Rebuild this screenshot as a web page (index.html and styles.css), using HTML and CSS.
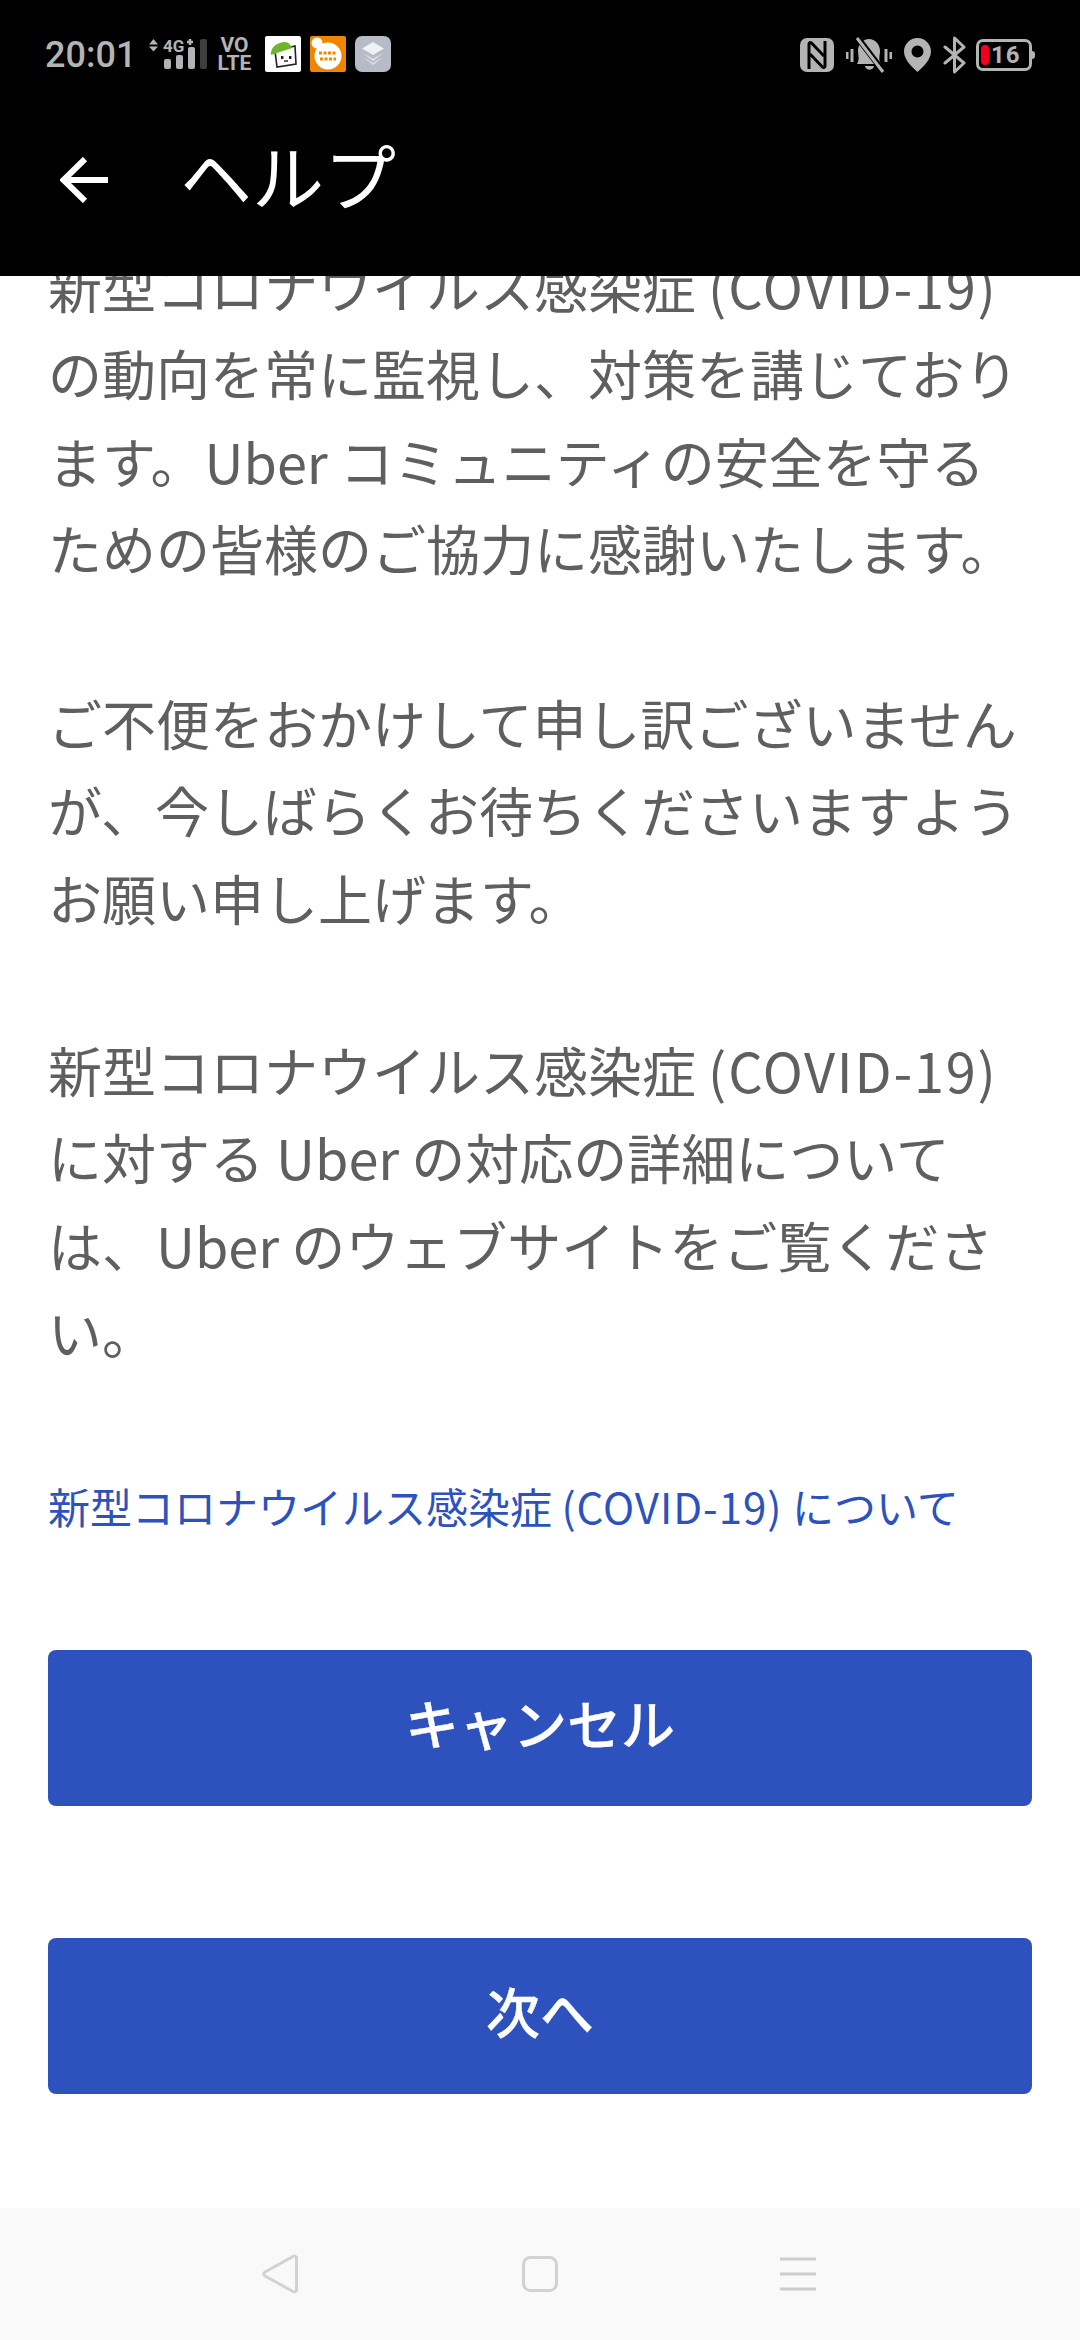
FILE: index.html
```html
<!DOCTYPE html>
<html lang="ja">
<head>
<meta charset="utf-8">
<title>ヘルプ</title>
<link rel="stylesheet" href="styles.css">
</head>
<body>
<div class="phone">
  <header class="top">
    <div class="status">
      <div class="status-left">
        <span class="time">20:01</span>
        <svg class="net" width="62" height="30" viewBox="0 0 62 30">
          <path d="M0 5.500 4.500 0 9 5.500ZM0 7.500H9L4.500 12.500Z" fill="#b4b4b4"/>
          <text x="14" y="12.500" class="net-text">4G</text>
          <path d="M41 0V6M38 3H44" stroke="#b4b4b4" stroke-width="2.500" fill="none"/>
          <rect x="15" y="20" width="7" height="10" rx="2" fill="#b4b4b4"/>
          <rect x="27" y="16" width="7" height="14" rx="2" fill="#b4b4b4"/>
          <rect x="39" y="8" width="7" height="22" rx="2" fill="#b4b4b4"/>
          <rect x="51" y="0" width="7" height="30" rx="2" fill="#3e3e3e"/>
        </svg>
        <div class="volte"><span>VO</span><span>LTE</span></div>
        <div class="apps">
          <svg class="app" width="36" height="36" viewBox="0 0 36 36">
            <rect width="36" height="36" rx="2" fill="#fff"/>
            <path d="M10 15 30 10 31 28 12 31Z" fill="#fff" stroke="#222" stroke-width="1.600"/>
            <path d="M6 19C5 11 13 6 20 6 23 6 26 9 27 12Z" fill="#6fb52c"/>
            <rect x="16" y="20" width="2.400" height="3" fill="#222"/><rect x="24" y="20" width="2.400" height="3" fill="#222"/>
            <path d="M19 25H23" stroke="#222" stroke-width="1.400"/>
          </svg>
          <svg class="app" width="36" height="36" viewBox="0 0 36 36">
            <rect width="36" height="36" rx="2" fill="#f28500"/>
            <circle cx="18" cy="20" r="13.500" fill="#fff"/><circle cx="7" cy="7" r="5.500" fill="#fff"/>
            <path d="M9 17H27M10 23H26" stroke="#f28500" stroke-width="3" stroke-dasharray="3 1.500"/>
          </svg>
          <svg class="app" width="36" height="36" viewBox="0 0 36 36">
            <rect width="36" height="36" rx="7" fill="#b7bbc6"/>
            <path d="M18 6 29 12.500 18 19 7 12.500Z" fill="#f0f1f4"/>
            <path d="M7 16.500 18 23 29 16.500 18 25Z" fill="#e6e8ec"/>
            <path d="M8 21 18 27 28 21 18 29Z" fill="#dfe1e7"/>
          </svg>
        </div>
      </div>
      <div class="status-right">
        <svg width="34" height="34" viewBox="0 0 34 34">
          <rect width="34" height="34" rx="7" fill="#b4b4b4"/>
          <path d="M9 31V6C9 4.500 10.500 4 11.500 5L24 18M25 3V28C25 29.500 23.500 30 22.500 29L10 16" fill="none" stroke="#000" stroke-width="3"/>
        </svg>
        <svg width="46" height="36" viewBox="0 0 46 36">
          <path d="M11 27C14 23 12 18 12 14 12 7 17 2 23 2 29 2 34 7 34 14 34 18 32 23 35 27ZM19 29H28C27 34 20 34 19 29Z" fill="#b4b4b4"/>
          <path d="M11 0 37 34" stroke="#000" stroke-width="6"/>
          <path d="M11 1 37 35" stroke="#b4b4b4" stroke-width="3"/>
          <path d="M1 15V22M6 12V25M40 12V25M45 15V22" stroke="#b4b4b4" stroke-width="3"/>
        </svg>
        <svg width="27" height="34" viewBox="0 0 27 34">
          <path fill-rule="evenodd" d="M13.500 0C6 0 0 6 0 13.500 0 22 9 30 13.500 34 18 30 27 22 27 13.500 27 6 21 0 13.500 0ZM13.500 7.500A6 6 0 1 1 13.500 19.500 6 6 0 1 1 13.500 7.500Z" fill="#b4b4b4"/>
        </svg>
        <svg width="23" height="38" viewBox="0 0 23 38">
          <path d="M2 11 21 27 11.500 36V2L21 11 2 27" fill="none" stroke="#b4b4b4" stroke-width="3" stroke-linejoin="round" stroke-linecap="round"/>
        </svg>
        <div class="battery">
          <div class="battery-body"><i class="battery-level"></i><span>16</span></div>
          <i class="battery-tip"></i>
        </div>
      </div>
    </div>
    <div class="bar">
      <svg class="back" width="48" height="46" viewBox="0 0 48 46">
        <path d="M48 23H4M25 2 3.500 23 25 44" fill="none" stroke="#fff" stroke-width="6"/>
      </svg>
      <h1 class="title">ヘルプ</h1>
    </div>
  </header>
  <main class="scroll">
    <div class="content">
      <p class="para lead">新型コロナウイルス感染症 <span class="caps">(COVID-19)</span><br>の動向を常に監視し、対策を講じており<br>ます。Uber コミュニティの安全を守る<br>ための皆様のご協力に感謝いたします。</p>
      <p class="para">ご不便をおかけして申し訳ございません<br>が、今しばらくお待ちくださいますよう<br>お願い申し上げます。</p>
      <p class="para">新型コロナウイルス感染症 <span class="caps">(COVID-19)</span><br>に対する Uber の対応の詳細について<br>は、Uber のウェブサイトをご覧くださ<br>い。</p>
      <a class="link">新型コロナウイルス感染症 <span class="caps-small">(COVID-19)</span> について</a>
      <button class="btn first">キャンセル</button>
      <button class="btn">次へ</button>
    </div>
  </main>
  <nav class="nav">
    <svg class="nav-back" width="36" height="40" viewBox="0 0 36 40"><path d="M31 2.500 3 18C1.500 19 1.500 21 3 22L31 37.500C33 38.500 34.500 37.500 34.500 36V4C34.500 2.500 33 1.500 31 2.500Z" fill="none" stroke="#d2d2d2" stroke-width="3" stroke-linejoin="round"/></svg>
    <svg width="36" height="36" viewBox="0 0 36 36"><rect x="1.500" y="1.500" width="33" height="33" rx="7" fill="none" stroke="#d2d2d2" stroke-width="3"/></svg>
    <svg width="36" height="34" viewBox="0 0 36 34"><path d="M0 2H36M0 17H36M0 32H36" stroke="#cdcdcd" stroke-width="3"/></svg>
  </nav>
</div>
</body>
</html>
```
FILE: styles.css
```css
* { box-sizing: border-box; }
html, body { margin: 0; padding: 0; }
body { font-family: "Noto Sans CJK JP", "Noto Sans", sans-serif; background: #fff; }
.phone { width: 1080px; height: 2340px; display: flex; flex-direction: column; overflow: hidden; }

.top { height: 276px; background: #000; flex: none; position: relative; z-index: 1; }
.status { height: 108px; padding: 36px 45px 0 45px; display: flex; justify-content: space-between; align-items: flex-start; }
.status-left { display: flex; align-items: flex-start; }
.time { font-family: Roboto, sans-serif; font-weight: 500; font-size: 36px; line-height: 36px; color: #b4b4b4; width: 104px; margin-top: 1px; }
.net { margin-top: 3px; overflow: visible; }
.net-text { font-family: Roboto, sans-serif; font-weight: 700; font-size: 17px; fill: #b4b4b4; }
.volte { display: flex; flex-direction: column; font-family: Roboto, sans-serif; font-weight: 700; font-size: 21px; line-height: 18px; color: #b4b4b4; align-items: center; margin-left: 7px; width: 33px; }
.apps { display: flex; gap: 9px; margin-left: 14px; }
.status-right { display: flex; align-items: center; gap: 12px; height: 36px; margin-top: 1px; }
.battery { display: flex; align-items: center; margin-left: -2px; }
.battery-body { width: 56px; height: 32px; border: 3px solid #b4b4b4; border-radius: 7px; display: flex; align-items: center; padding-left: 2px; gap: 2px; }
.battery-body span { font-family: Roboto, sans-serif; font-weight: 700; font-size: 24px; letter-spacing: 1px; color: #b4b4b4; line-height: 24px; }
.battery-level { width: 8px; height: 20px; background: #f4001c; border-radius: 4px; flex: none; }
.battery-tip { width: 3px; height: 8px; background: #b4b4b4; border-radius: 0 3px 3px 0; }

.bar { height: 168px; display: flex; align-items: center; padding-left: 60px; }
.back { flex: none; margin-top: -24px; }
.title { margin: -36px 0 0 72px; font-size: 72px; font-weight: 400; color: #fff; line-height: 100px; }

.scroll { flex: 1; overflow: hidden; background: #fff; }
.content { margin-top: -34px; padding: 0 48px; display: flex; flex-direction: column; align-items: stretch; }
.para { margin: 0 0 85px; font-size: 54px; line-height: 87.300px; color: #5f5f5f; white-space: nowrap; }
.para.lead { margin-bottom: 88px; }
.caps { letter-spacing: 1.800px; }
.caps-small { letter-spacing: 1px; }
.link { font-size: 42px; line-height: 60px; color: #2d52bd; margin-top: 16px; white-space: nowrap; }
.btn { height: 156px; border: 0; border-radius: 8px; background: #2d52bd; color: #fff; font: 500 54px "Noto Sans CJK JP", sans-serif; -webkit-text-stroke: 0.3px #fff; padding: 0 0 12px; margin-top: 112px; }
.btn.first { margin-top: 114px; margin-bottom: 20px; }

.nav { height: 132px; flex: none; background: #f9f9f9; display: flex; justify-content: center; align-items: center; gap: 222px; padding-right: 2px; }
.nav-back { margin-right: 2px; }
```
